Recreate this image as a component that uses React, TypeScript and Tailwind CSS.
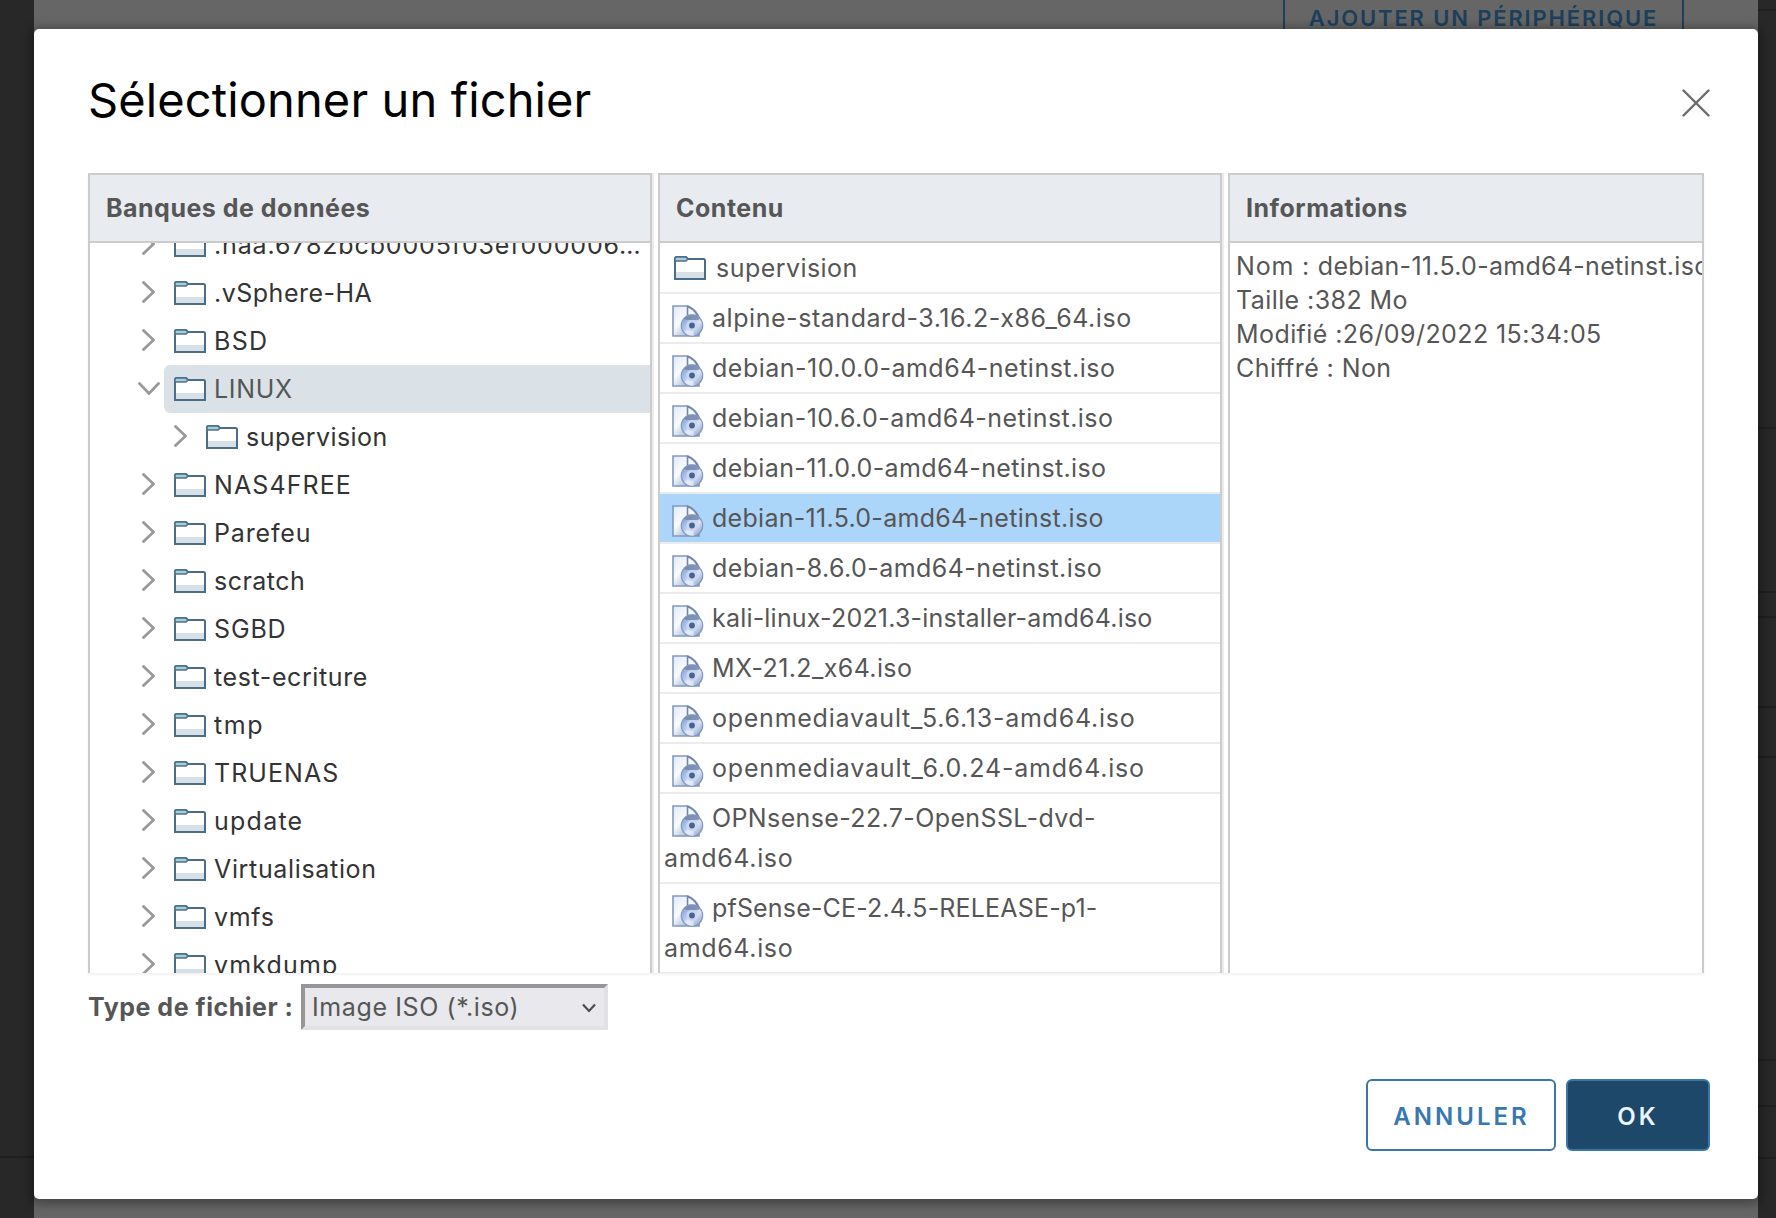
import React from "react";

type TreeNode = { label: string; track: string; open?: boolean; nested?: boolean };
type FileEntry = { name: string; rest?: string; track: string; folder?: boolean; selected?: boolean };

const tree: TreeNode[] = [
  { label: ".naa.6782bcb0005f03ef000006…", track: "tracking-[0.86px]" },
  { label: ".vSphere-HA", track: "tracking-[0.5px]" },
  { label: "BSD", track: "tracking-[1.3px]" },
  { label: "LINUX", track: "tracking-[0.65px]", open: true },
  { label: "supervision", track: "tracking-[0.45px]", nested: true },
  { label: "NAS4FREE", track: "tracking-[1.1px]" },
  { label: "Parefeu", track: "tracking-[0.85px]" },
  { label: "scratch", track: "tracking-[0.48px]" },
  { label: "SGBD", track: "tracking-[0.85px]" },
  { label: "test-ecriture", track: "tracking-[0.6px]" },
  { label: "tmp", track: "tracking-[1.6px]" },
  { label: "TRUENAS", track: "tracking-[1.05px]" },
  { label: "update", track: "tracking-[1.25px]" },
  { label: "Virtualisation", track: "tracking-[0.66px]" },
  { label: "vmfs", track: "tracking-[0.7px]" },
  { label: "vmkdump", track: "tracking-[1.15px]" },
];

const files: FileEntry[] = [
  { name: "supervision", track: "tracking-[0.45px]", folder: true },
  { name: "alpine-standard-3.16.2-x86_64.iso", track: "tracking-[0.55px]" },
  { name: "debian-10.0.0-amd64-netinst.iso", track: "tracking-[0.5px]" },
  { name: "debian-10.6.0-amd64-netinst.iso", track: "tracking-[0.45px]" },
  { name: "debian-11.0.0-amd64-netinst.iso", track: "tracking-[0.37px]" },
  { name: "debian-11.5.0-amd64-netinst.iso", track: "tracking-[0.29px]", selected: true },
  { name: "debian-8.6.0-amd64-netinst.iso", track: "tracking-[0.44px]" },
  { name: "kali-linux-2021.3-installer-amd64.iso", track: "tracking-[0.2px]" },
  { name: "MX-21.2_x64.iso", track: "tracking-[0.38px]" },
  { name: "openmediavault_5.6.13-amd64.iso", track: "tracking-[0.75px]" },
  { name: "openmediavault_6.0.24-amd64.iso", track: "tracking-[0.79px]" },
  { name: "OPNsense-22.7-OpenSSL-dvd-", rest: "amd64.iso", track: "tracking-[0.38px]" },
  { name: "pfSense-CE-2.4.5-RELEASE-p1-", rest: "amd64.iso", track: "tracking-[0.17px]" },
];

function FolderIcon() {
  return (
    <svg className="h-6 w-8 shrink-0" viewBox="0 0 32 24" fill="none">
      <path d="M1 23V2.5Q1 1 2.5 1H12l2 2H29.5Q31 3 31 4.5V23Z" fill="#fff" />
      <path d="M2 16h28v6H2z" fill="#d8e0e7" />
      <path d="M1 23V2.5Q1 1 2.5 1H12l2 2H29.5Q31 3 31 4.5V23Z" stroke="#4a6e87" strokeWidth="2" />
      <path d="M1 2.500Q1 1 2.500 1H11.500Q13 1.500 13.500 3Q13 5 11.500 5H1Z" fill="#a9cbde" stroke="#4d7188" strokeWidth="1.400" />
    </svg>
  );
}

function IsoIcon() {
  return (
    <svg className="block h-8 w-8" viewBox="0 0 32 32" fill="none">
      <defs>
        <linearGradient id="page" x1="0" y1="0" x2="1" y2="1">
          <stop offset="0" stopColor="#dfe9f7" />
          <stop offset="0.4" stopColor="#f8fbfe" />
          <stop offset="1" stopColor="#6f8cbd" />
        </linearGradient>
        <linearGradient id="disc" x1="0" y1="0" x2="1" y2="1">
          <stop offset="0" stopColor="#8496b5" />
          <stop offset="0.35" stopColor="#a9c2ee" />
          <stop offset="0.6" stopColor="#d8e3f4" />
          <stop offset="1" stopColor="#7b91bc" />
        </linearGradient>
      </defs>
      <path d="M1 1H16Q23 4 27 12V31H1Z" fill="url(#page)" stroke="#8299c2" strokeWidth="1.600" />
      <path d="M15.500 1.500Q22 4 25.500 10.500H15.500Z" fill="#f4f8fc" stroke="#7386a8" strokeWidth="1.600" />
      <circle cx="20" cy="20.500" r="10.700" fill="url(#disc)" stroke="#8298c0" strokeWidth="1.200" />
      <path d="M12 13.500Q20 7 28 13.500L26 15H14Z" fill="#6f81a3" opacity=".75" />
      <path d="M20 20.500L12.500 27A10 10 0 0 0 22 30.500Z" fill="#e9f0f9" opacity=".7" />
      <circle cx="20" cy="20.500" r="5.600" fill="#c9d8f0" />
      <circle cx="20" cy="20.500" r="2.900" fill="#4a6290" />
    </svg>
  );
}

function Chevron({ down }: { down?: boolean }) {
  return down ? (
    <svg className="mt-[2px] h-[14px] w-[22px] shrink-0" viewBox="0 0 22 14" fill="none" stroke="#9a9a9a" strokeWidth="2.800" strokeLinecap="round">
      <path d="M1.500 1.500L11 11.500L20.500 1.500" />
    </svg>
  ) : (
    <svg className="h-[22px] w-[13px] shrink-0" viewBox="0 0 13 22" fill="none" stroke="#9a9a9a" strokeWidth="2.800" strokeLinecap="round">
      <path d="M1.500 1.500L11.500 11L1.500 20.500" />
    </svg>
  );
}

function TreeRow({ node }: { node: TreeNode }) {
  return (
    <div className={`flex h-12 shrink-0 ${node.nested ? "pl-20" : "pl-12"}`}>
      <div className={`flex w-[26px] shrink-0 items-center pb-[2px] ${node.open ? "" : "pl-1"}`}>
        <Chevron down={node.open} />
      </div>
      <div
        className={`flex min-w-0 flex-1 items-center gap-2 rounded-l-md pl-[10px] ${
          node.open ? "bg-[#dae2e8] text-[#565656]" : "text-[#333]"
        }`}
      >
        <FolderIcon />
        <span className={`pt-[2px] whitespace-nowrap ${node.track}`}>{node.label}</span>
      </div>
    </div>
  );
}

function FileRow({ file }: { file: FileEntry }) {
  return (
    <div className={`border-b-2 border-[#ebebeb] py-1 pl-[4px] leading-10 ${file.selected ? "bg-[#acd5fa]" : ""}`}>
      <div className={`flex h-10 items-center ${file.folder ? "gap-[10px] pl-[10px]" : "gap-[8px] pl-[8px]"}`}>
        {file.folder ? (
          <FolderIcon />
        ) : (
          <span className="shrink-0 pt-[6px]">
            <IsoIcon />
          </span>
        )}
        <span className={`whitespace-nowrap ${file.track}`}>{file.name}</span>
      </div>
      {file.rest && <div className="h-10 tracking-[0.65px]">{file.rest}</div>}
    </div>
  );
}

function Panel({ title, width, strip, children }: { title: string; width: string; strip?: boolean; children: React.ReactNode }) {
  return (
    <div className={`flex h-[800px] ${strip ? "border-r-2 border-[#ececec]" : ""}`}>
      <section className={`flex ${width} flex-col border-2 border-b-0 border-[#ccc] bg-white`}>
        <h2 className="flex h-[68px] shrink-0 items-center border-b-2 border-[#ccc] bg-[#e8ebf0] pt-[2px] pl-4 font-bold tracking-[0.5px]">
          {title}
        </h2>
        <div className="flex-1 overflow-hidden">{children}</div>
      </section>
    </div>
  );
}

export default function App() {
  return (
    <div className="relative flex h-[1218px] w-[1776px] overflow-hidden bg-[#282828] font-['Inter',sans-serif] text-[25px] text-[#565656]">
      <div className="flex w-[34px] flex-col">
        <div className="h-[1158px] border-b-2 border-[#1f1f1f]" />
      </div>
      <div className="w-[1724px] bg-[#666]">
        <div className="ml-[1249px] flex h-[50px] w-[401px] justify-center border-x-2 border-[#1e4059] pt-[4px] text-[22px] leading-[29px] font-semibold tracking-[1.85px] text-[#1c3f5c]">
          AJOUTER UN PÉRIPHÉRIQUE
        </div>
      </div>
      <div className="flex w-[18px] flex-col *:shrink-0 *:border-b-2 *:border-[#202020]">
        <div className="h-[11px]" />
        <div className="h-[418px]" />
        <div className="h-[164px]" />
        <div className="h-[25px]" />
        <div className="h-[90px]" />
        <div className="h-[50px]" />
        <div className="h-[303px]" />
        <div className="h-[46px]" />
        <div className="h-[52px]" />
      </div>
      <div
        role="dialog"
        className="absolute top-[29px] left-[34px] flex h-[1170px] w-[1724px] flex-col rounded-[5px] bg-white shadow-[0_2px_10px_4px_rgba(0,0,0,0.3)]"
      >
        <header className="flex h-[144px] shrink-0 items-start justify-between pr-[48px] pl-[54px]">
          <h1 className="pt-[41px] text-[47px] leading-[60px] font-normal tracking-[0.12px] text-black">Sélectionner un fichier</h1>
          <svg className="mt-[60px] h-7 w-7" viewBox="0 0 28 28" stroke="#6b6b6b" strokeWidth="2.400" strokeLinecap="round">
            <path d="M1.500 1.500L26.500 26.500M26.500 1.500L1.500 26.500" />
          </svg>
        </header>
        <div className="ml-[54px] flex w-[1616px] gap-1 shadow-[0_2px_2px_rgba(0,0,0,0.05)]">
          <Panel title="Banques de données" width="w-[564px]" strip>
            <div className="-mt-[22px] flex flex-col">
              {tree.map((n) => (
                <TreeRow key={n.label} node={n} />
              ))}
            </div>
          </Panel>
          <Panel title="Contenu" width="w-[564px]" strip>
            <div className="mt-px">
              {files.map((f) => (
                <FileRow key={f.name} file={f} />
              ))}
            </div>
          </Panel>
          <Panel title="Informations" width="w-[476px]">
            <div className="pt-[6px] pl-[6px] leading-[34px] tracking-[0.42px] whitespace-nowrap">
              <p>
                <span className="tracking-[0.8px]">Nom : </span>
                <span className="tracking-[0.29px]">debian-11.5.0-amd64-netinst.iso</span>
              </p>
              <p>Taille :382 Mo</p>
              <p>Modifié :26/09/2022 15:34:05</p>
              <p>Chiffré : Non</p>
            </div>
          </Panel>
        </div>
        <div className="mt-[11px] flex h-[46px] items-center pl-[54px]">
          <span className="w-[213px] pt-[2px] font-bold tracking-[0.52px] whitespace-nowrap">Type de fichier :</span>
          <div className="flex h-[46px] w-[307px] items-center justify-between border-4 border-t-[#969696] border-r-[#e2e2e4] border-b-[#e2e2e4] border-l-[#969696] bg-[#e8e8ed] pr-2 pl-[7px]">
            <span className="pt-[2px] tracking-[0.6px]">Image ISO (*.iso)</span>
            <svg className="mt-px h-[10px] w-[14px]" viewBox="0 0 14 10" fill="none" stroke="#4c4c4c" strokeWidth="2.200">
              <path d="M1 1.500L7 8L13 1.500" />
            </svg>
          </div>
        </div>
        <footer className="mt-[49px] flex justify-end gap-[10px] pr-[48px] text-[24px] font-semibold">
          <button className="flex h-[72px] w-[190px] items-center justify-center rounded-md border-2 border-[#3b76ab] pt-[3px] pl-px tracking-[3px] text-[#3878b0]">
            ANNULER
          </button>
          <button className="flex h-[72px] w-[144px] items-center justify-center rounded-md border-2 border-[#3b76ab] bg-[#1d486a] pt-[3px] tracking-[3px] text-[#eaf4fb]">
            OK
          </button>
        </footer>
      </div>
    </div>
  );
}
